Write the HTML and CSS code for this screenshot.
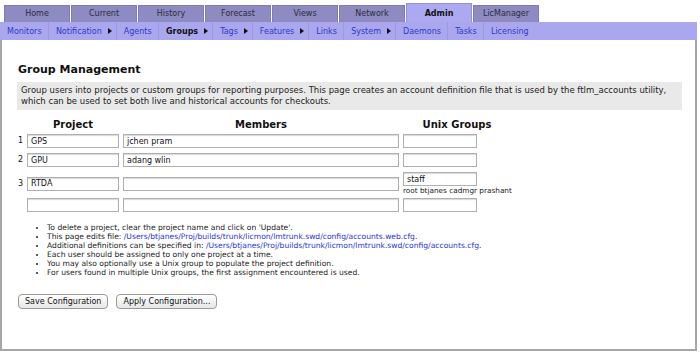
FILE: index.html
```html
<!DOCTYPE html>
<html>
<head>
<meta charset="utf-8">
<title>Group Management</title>
<link rel="stylesheet" href="styles.css">
</head>
<body>
<div class="tabs">
  <div class="tab">Home</div>
  <div class="tab">Current</div>
  <div class="tab">History</div>
  <div class="tab">Forecast</div>
  <div class="tab">Views</div>
  <div class="tab">Network</div>
  <div class="tab tab-active">Admin</div>
  <div class="tab">LicManager</div>
</div>
<div class="subnav">
  <span class="sub first">Monitors</span>
  <span class="sub has-arrow">Notification<i class="arrow"></i></span>
  <span class="sub">Agents</span>
  <span class="sub has-arrow sub-active">Groups<i class="arrow"></i></span>
  <span class="sub has-arrow">Tags<i class="arrow"></i></span>
  <span class="sub has-arrow">Features<i class="arrow"></i></span>
  <span class="sub">Links</span>
  <span class="sub has-arrow">System<i class="arrow"></i></span>
  <span class="sub">Daemons</span>
  <span class="sub">Tasks</span>
  <span class="sub">Licensing</span>
</div>
<div class="panel">
  <h1 class="title">Group Management</h1>
  <div class="desc">Group users into projects or custom groups for reporting purposes. This page creates an account definition file that is used by the ftlm_accounts utility, which can be used to set both live and historical accounts for checkouts.</div>
  <div class="grid">
    <div class="row head">
      <span></span>
      <span class="h h-proj">Project</span>
      <span class="h h-mem">Members</span>
      <span class="h h-unix">Unix Groups</span>
    </div>
    <div class="row r1">
      <span class="num">1</span>
      <input class="in proj" value="GPS">
      <input class="in mem" value="jchen pram">
      <input class="in unix" value="">
    </div>
    <div class="row r2">
      <span class="num">2</span>
      <input class="in proj" value="GPU">
      <input class="in mem" value="adang wlin">
      <input class="in unix" value="">
    </div>
    <div class="row r3">
      <span class="num">3</span>
      <input class="in proj" value="RTDA">
      <input class="in mem" value="">
      <div class="unixcell">
        <input class="in unix" value="staff">
        <div class="unixnote">root btjanes cadmgr prashant</div>
      </div>
    </div>
    <div class="row r4">
      <span class="num"></span>
      <input class="in proj" value="">
      <input class="in mem" value="">
      <input class="in unix" value="">
    </div>
  </div>
  <ul class="notes">
    <li>To delete a project, clear the project name and click on 'Update'.</li>
    <li>This page edits file: <a class="lnk">/Users/btjanes/Proj/builds/trunk/licmon/lmtrunk.swd/config/accounts.web.cfg</a>.</li>
    <li>Additional definitions can be specified in: <a class="lnk">/Users/btjanes/Proj/builds/trunk/licmon/lmtrunk.swd/config/accounts.cfg</a>.</li>
    <li>Each user should be assigned to only one project at a time.</li>
    <li>You may also optionally use a Unix group to populate the project definition.</li>
    <li>For users found in multiple Unix groups, the first assignment encountered is used.</li>
  </ul>
  <div class="buttons">
    <button class="btn">Save Configuration</button>
    <button class="btn">Apply Configuration...</button>
  </div>
</div>
</body>
</html>
```
FILE: styles.css
```css
html, body {
  margin: 0;
  padding: 0;
  background: #ffffff;
  font-family: "DejaVu Sans", Verdana, sans-serif;
  color: #222;
}
.tabs {
  display: flex;
  align-items: flex-end;
  gap: 1px;
  height: 22px;
  padding-left: 4px;
}
.tab {
  width: 66px;
  height: 17px;
  box-sizing: border-box;
  background: #8e8ac2;
  border: 1px solid #7f7bb4;
  border-bottom: none;
  font-size: 8px;
  line-height: 16px;
  text-align: center;
  color: #2c2c3a;
}
.tab-active {
  height: 19px;
  line-height: 19px;
  background: #aca9f0;
  border-color: #9491d4;
  font-weight: bold;
  color: #111;
}
.subnav {
  display: flex;
  align-items: center;
  width: 697px;
  height: 18px;
  background: #aaa7ef;
  font-size: 8px;
}
.sub {
  display: flex;
  align-items: center;
  height: 18px;
  padding: 0 6.3px 0 7px;
  border-left: 1px solid #9c99de;
  color: #2a3bc0;
}
.sub.first {
  border-left: none;
}
.sub.has-arrow {
  padding-right: 4px;
}
.sub-active {
  color: #111;
  font-weight: bold;
}
.arrow {
  display: inline-block;
  width: 0;
  height: 0;
  margin-left: 6px;
  border-top: 3px solid transparent;
  border-bottom: 3px solid transparent;
  border-left: 4px solid #111;
}
.panel {
  border: 2px solid #a6a6a6;
  border-top: none;
  padding: 23px 0 0 16px;
  box-sizing: border-box;
  width: 697px;
  height: 311px;
}
.title {
  margin: 0;
  font-size: 11px;
  line-height: 14px;
  font-weight: bold;
  color: #111;
}
.desc {
  margin-top: 5px;
  margin-left: -1px;
  width: 665px;
  box-sizing: border-box;
  padding: 3px 4px;
  background: #e9e9e9;
  font-size: 8.5px;
  line-height: 11px;
  color: #222;
}
.grid {
  margin-top: 9px;
  display: flex;
  flex-direction: column;
}
.row {
  display: grid;
  grid-template-columns: 9px 96px 280px 108px;
  align-items: center;
}
.head {
  height: 12px;
}
.r1 { margin-top: 3px; }
.r2 { margin-top: 5px; }
.r3 { margin-top: 5px; }
.r4 { margin-top: 3px; }
.h {
  font-size: 10px;
  line-height: 12px;
  font-weight: bold;
  text-align: center;
  color: #111;
}
.h-proj { width: 92px; }
.h-mem { width: 276px; }
.h-unix { width: 108px; }
.num {
  font-size: 8px;
  color: #111;
  line-height: 10px;
}
.in {
  box-sizing: border-box;
  height: 14px;
  margin: 0;
  padding: 0 3px;
  border: 1px solid #b0b0b0;
  box-shadow: inset 0 1px 1px #d8d8d8;
  font-family: "DejaVu Sans", Verdana, sans-serif;
  font-size: 8px;
  color: #111;
  background: #fff;
  outline: none;
}
.proj { width: 92px; }
.mem { width: 276px; }
.unix { width: 74px; }
.unixcell {
  display: flex;
  flex-direction: column;
}
.unixnote {
  font-size: 7.3px;
  line-height: 9px;
  color: #222;
  white-space: nowrap;
}
.notes {
  margin: 11px 0 0 0;
  padding-left: 29px;
  font-size: 7.6px;
  line-height: 9px;
  color: #222;
}
.lnk {
  color: #2a33d6;
}
.buttons {
  margin-top: 17px;
  display: flex;
  gap: 8px;
}
.btn {
  height: 15px;
  box-sizing: border-box;
  padding: 0 6px;
  border: 1px solid #9a9a9a;
  border-radius: 4px;
  background: linear-gradient(#ffffff, #e6e6e6);
  font-family: "DejaVu Sans", Verdana, sans-serif;
  font-size: 8px;
  line-height: 13px;
  color: #111;
}
```
